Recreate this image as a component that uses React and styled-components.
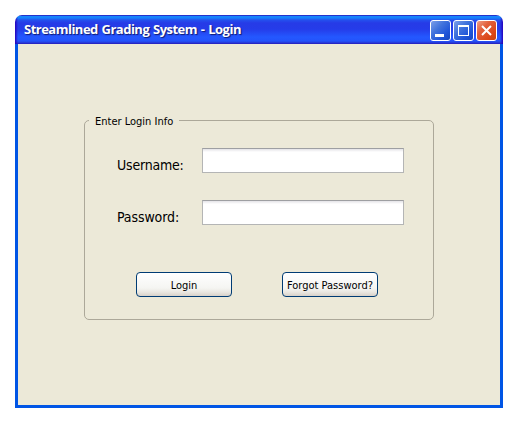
import React from "react";
import styled, { createGlobalStyle } from "styled-components";

const GlobalStyle = createGlobalStyle`
  * { box-sizing: border-box; }
  body { margin: 0; background: #fff; }
`;

const Desktop = styled.main`
  width: 518px;
  height: 421px;
  padding: 15px 15px 13px;
  background: #fff;
  color: #000;
  font-family: "DejaVu Sans Condensed", "DejaVu Sans", sans-serif;
  font-stretch: condensed;
`;

const Window = styled.section`
  display: flex;
  flex-direction: column;
  width: 488px;
  height: 393px;
`;

const TitleBar = styled.header`
  display: flex;
  align-items: center;
  flex: none;
  height: 29px;
  padding: 2px 6px 0 9px;
  border-radius: 7px 7px 0 0;
  background:
    linear-gradient(90deg, #2500bd, rgba(37, 0, 189, 0) 3px calc(100% - 3px), #2500bd),
    linear-gradient(#2432cb 0, #2432cb 1px, #1787fc 1px, #1580fb 3px, #2450ee 5px, #263be7 8px, #253ce9 14px, #2458ff 22px, #2353fb 26px, #2634d2 28px, #2618b6 29px);
`;

const Title = styled.h1`
  flex: 1;
  margin: 0;
  padding-bottom: 3px;
  color: #fff;
  font: bold 13px/18px "Open Sans", sans-serif;
  letter-spacing: -0.51px;
  word-spacing: 0.9px;
  white-space: nowrap;
  text-shadow: 1px 1px 1px #101c70;
`;

const Controls = styled.div`
  display: flex;
  gap: 2px;
`;

const ControlButton = styled.button`
  width: 21px;
  height: 21px;
  padding: 0;
  border: 1px solid #fff;
  border-radius: 3px;
  background: ${({ $close }) =>
    $close
      ? "linear-gradient(135deg, #efa088 0, #e2603c 35%, #dc4718 75%, #c74110 100%)"
      : "linear-gradient(135deg, #7d9fe9 0, #4173dc 38%, #1f55d9 72%, #1747bd 100%)"};

  svg { display: block; }
`;

const Body = styled.div`
  flex: 1;
  padding: 76px 66px 0;
  border: solid #0055e5;
  border-width: 0 3px 3px;
  background: #ece9d8;
`;

const LoginForm = styled.form`
  position: relative;
  width: 350px;
  height: 200px;
  padding: 27px 29px 0 32px;
  border: 1px solid #aca899;
  border-radius: 5px;
`;

const Legend = styled.div`
  position: absolute;
  top: -8px;
  left: 4px;
  width: 90px;
  padding: 1px 0 0 6px;
  background: #ece9d8;
  font-size: 11px;
  line-height: 16px;
  letter-spacing: 0;
  white-space: nowrap;
`;

const Row = styled.div`
  display: flex;
  height: 25px;
  margin-bottom: 27px;
`;

const Label = styled.label`
  flex: 0 0 85px;
  padding-top: 8px;
  font-size: 14px;
  line-height: 18px;
  letter-spacing: ${({ $spacing }) => $spacing}px;
  white-space: nowrap;
`;

const Input = styled.input`
  width: 202px;
  height: 25px;
  padding: 0 5px;
  border: 1px solid #b4b5b5;
  border-top-color: #9e9fa2;
  border-radius: 0;
  outline: 0;
  background: linear-gradient(#e4e3e7, #fff 3px);
`;

const Actions = styled.div`
  display: flex;
  gap: 50px;
  margin: 47px 0 0 19px;
`;

const Button = styled.button`
  width: 96px;
  height: 25px;
  padding: 1px 0 0;
  border: 1px solid #003c74;
  border-radius: 4px;
  background: linear-gradient(#fff, #f5f5f2 65%, #eae8e2 82%, #d8d1c9);
  color: #000;
  font-family: inherit;
  font-stretch: condensed;
  font-size: 11px;
  letter-spacing: 0;
  white-space: nowrap;
`;

export default function App() {
  return (
    <>
      <GlobalStyle />
      <Desktop>
        <Window>
          <TitleBar>
            <Title>Streamlined Grading System - Login</Title>
            <Controls>
              <ControlButton aria-label="Minimize">
                <svg width="19" height="19"><path d="M4 13h9v3H4z" fill="#fff" /></svg>
              </ControlButton>
              <ControlButton aria-label="Maximize">
                <svg width="19" height="19"><path fillRule="evenodd" d="M4 4h11v11H4zM5 6v8h9V6z" fill="#fff" /></svg>
              </ControlButton>
              <ControlButton $close aria-label="Close">
                <svg width="19" height="19"><path d="M5 5l9 9M14 5l-9 9" stroke="#fff" strokeWidth="2" /></svg>
              </ControlButton>
            </Controls>
          </TitleBar>
          <Body>
            <LoginForm onSubmit={(e) => e.preventDefault()}>
              <Legend>Enter Login Info</Legend>
              <Row>
                <Label htmlFor="username" $spacing={-0.2}>Username:</Label>
                <Input id="username" />
              </Row>
              <Row>
                <Label htmlFor="password" $spacing={-0.1}>Password:</Label>
                <Input id="password" type="password" />
              </Row>
              <Actions>
                <Button type="submit">Login</Button>
                <Button type="button">Forgot Password?</Button>
              </Actions>
            </LoginForm>
          </Body>
        </Window>
      </Desktop>
    </>
  );
}
